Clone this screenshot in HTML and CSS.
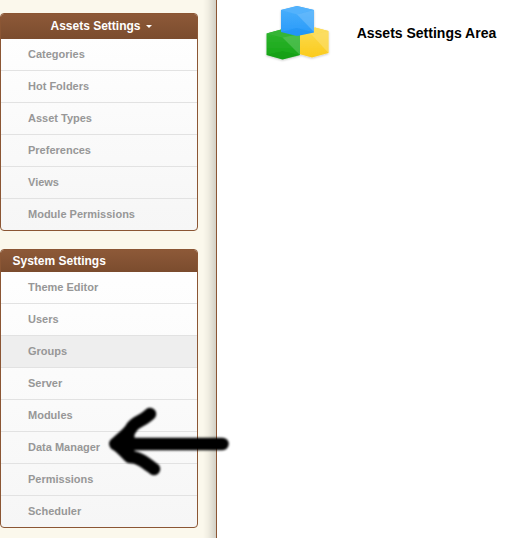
FILE: index.html
```
<!DOCTYPE html>
<html lang="en">
<head>
<meta charset="utf-8">
<title>Assets Settings</title>
<link rel="stylesheet" href="styles.css">
</head>
<body>
<div class="layout">
  <aside class="sidebar">
    <nav class="panel">
      <h2 class="panel-title panel-title-menu">Assets Settings<span class="caret"></span></h2>
      <ul class="menu">
        <li>Categories</li>
        <li>Hot Folders</li>
        <li>Asset Types</li>
        <li>Preferences</li>
        <li>Views</li>
        <li>Module Permissions</li>
      </ul>
    </nav>
    <nav class="panel">
      <h2 class="panel-title">System Settings</h2>
      <ul class="menu">
        <li>Theme Editor</li>
        <li>Users</li>
        <li class="active">Groups</li>
        <li>Server</li>
        <li>Modules</li>
        <li>Data Manager</li>
        <li>Permissions</li>
        <li>Scheduler</li>
      </ul>
    </nav>
  </aside>
  <main class="content">
    <svg class="cubes" width="72" height="66" viewBox="262 0 72 66">
      <defs>
        <linearGradient id="gy" x1="0" y1="0" x2="0" y2="1"><stop offset="0" stop-color="#fbdb50"/><stop offset="1" stop-color="#fbcb1c"/></linearGradient>
        <linearGradient id="gg" x1="0" y1="0" x2="0" y2="1"><stop offset="0" stop-color="#2fb62f"/><stop offset="1" stop-color="#16a516"/></linearGradient>
        <linearGradient id="gb" x1="0" y1="0" x2="0" y2="1"><stop offset="0" stop-color="#4cb0fb"/><stop offset="1" stop-color="#2599fa"/></linearGradient>
        <filter id="sh" x="-20%" y="-20%" width="140%" height="150%"><feDropShadow dx="0" dy="1" stdDeviation="1.2" flood-opacity=".22"/></filter>
      </defs>
      <g filter="url(#sh)">
        <path fill="url(#gy)" d="M299 31l16-3.500 13.500 3.500v22L312 57.500 299 54z"/>
        <path fill="#fbdd5c" d="M299 31l16-3.500 13.500 3.500L312 35z"/>
        <path fill="#fde27a" opacity=".5" d="M312 35l16.500-4v22z"/>
        <path fill="url(#gg)" d="M266.500 33.500L283 29l17 5v21l-17.500 4.500-16-4.500z"/>
        <path fill="#35b536" d="M266.500 33.500L283 29l17 5-17.500 3.500z"/>
        <path fill="#65c866" opacity=".55" d="M282.500 37.500L300 34v21z"/>
        <path fill="#078b0d" opacity=".25" d="M266.500 55l16-4L300 55.500l-17.500 4z"/>
        <path fill="url(#gb)" d="M281 10l16-4 17 4v22.500L297 36l-16-4z"/>
        <path fill="#52b2fc" d="M281 10l16-4 17 4-17 4.500z"/>
        <path fill="#7cc4fc" opacity=".5" d="M297 14.500l17-4.500v22z"/>
        <path fill="#087fe5" opacity=".22" d="M281 32l16-4 17 4.500-17 3.500z"/>
      </g>
    </svg>
    <h1 class="page-title">Assets Settings Area</h1>
  </main>
</div>
<svg class="arrow" width="140" height="90" viewBox="100 395 140 90">
  <path d="M222.500 444H115.500"/>
  <path d="M150 414l-3 2.500c-6 5-11 5-15 10.500-3 6-10.500 11-16.500 17 8 5 9.500 9 14.500 13 9 0 16 6 24 12"/>
  <path class="arrow-tip" d="M115 444l18-13v27z"/>
</svg>
</body>
</html>
```
FILE: styles.css
```
* {
  box-sizing: border-box;
}

body {
  margin: 0;
  background: #fff;
  font-family: "Liberation Sans", Arial, sans-serif;
  overflow: hidden;
}

.layout {
  display: flex;
  height: 538px;
}

.sidebar {
  width: 217px;
  flex: none;
  padding-top: 13px;
  border-right: 1px solid #8b5634;
  background: linear-gradient(to right, #fbf8ec 203px, #f1eee2 208px, #d2d0c6 216px);
}

.panel {
  width: 198px;
  margin-bottom: 18px;
  border: 1px solid #8b5634;
  border-radius: 4px;
  overflow: hidden;
  background: linear-gradient(#fff, #f6f6f6);
}

.panel-title {
  height: 22px;
  margin: 0;
  padding-left: 11.500px;
  background: linear-gradient(#8d5938, #7b4c2e);
  color: #fff;
  font-size: 12px;
  line-height: 22px;
}

.panel-title-menu {
  display: flex;
  justify-content: center;
  align-items: center;
  height: 25px;
  padding: 0 0 1px 4px;
  line-height: 23px;
}

.caret {
  margin: 0 0 0 5px;
  border: 3px solid transparent;
  border-top-color: #fff;
  border-bottom: 0;
}

.menu {
  margin: 0;
  padding: 0;
  list-style: none;
}

.menu li {
  height: 32px;
  padding-left: 27px;
  border-bottom: 1px solid #e2e2e2;
  color: #979797;
  font-size: 11px;
  font-weight: bold;
  line-height: 31px;
}

.menu li:last-child {
  height: 31px;
  border-bottom: 0;
}

.menu .active {
  background: #eee;
}

.content {
  display: flex;
  align-items: flex-start;
  padding-left: 45px;
}

.cubes {
  flex: none;
}

.page-title {
  margin: 0 0 0 22.700px;
  font-size: 14px;
  line-height: 66px;
  color: #000;
  white-space: nowrap;
}

.arrow {
  position: absolute;
  left: 100px;
  top: 395px;
  fill: none;
  stroke: #000;
  stroke-width: 12.500;
  stroke-linecap: round;
  stroke-linejoin: round;
  filter: blur(1px);
}

.arrow-tip {
  fill: #000;
  stroke-width: 3;
}
```
